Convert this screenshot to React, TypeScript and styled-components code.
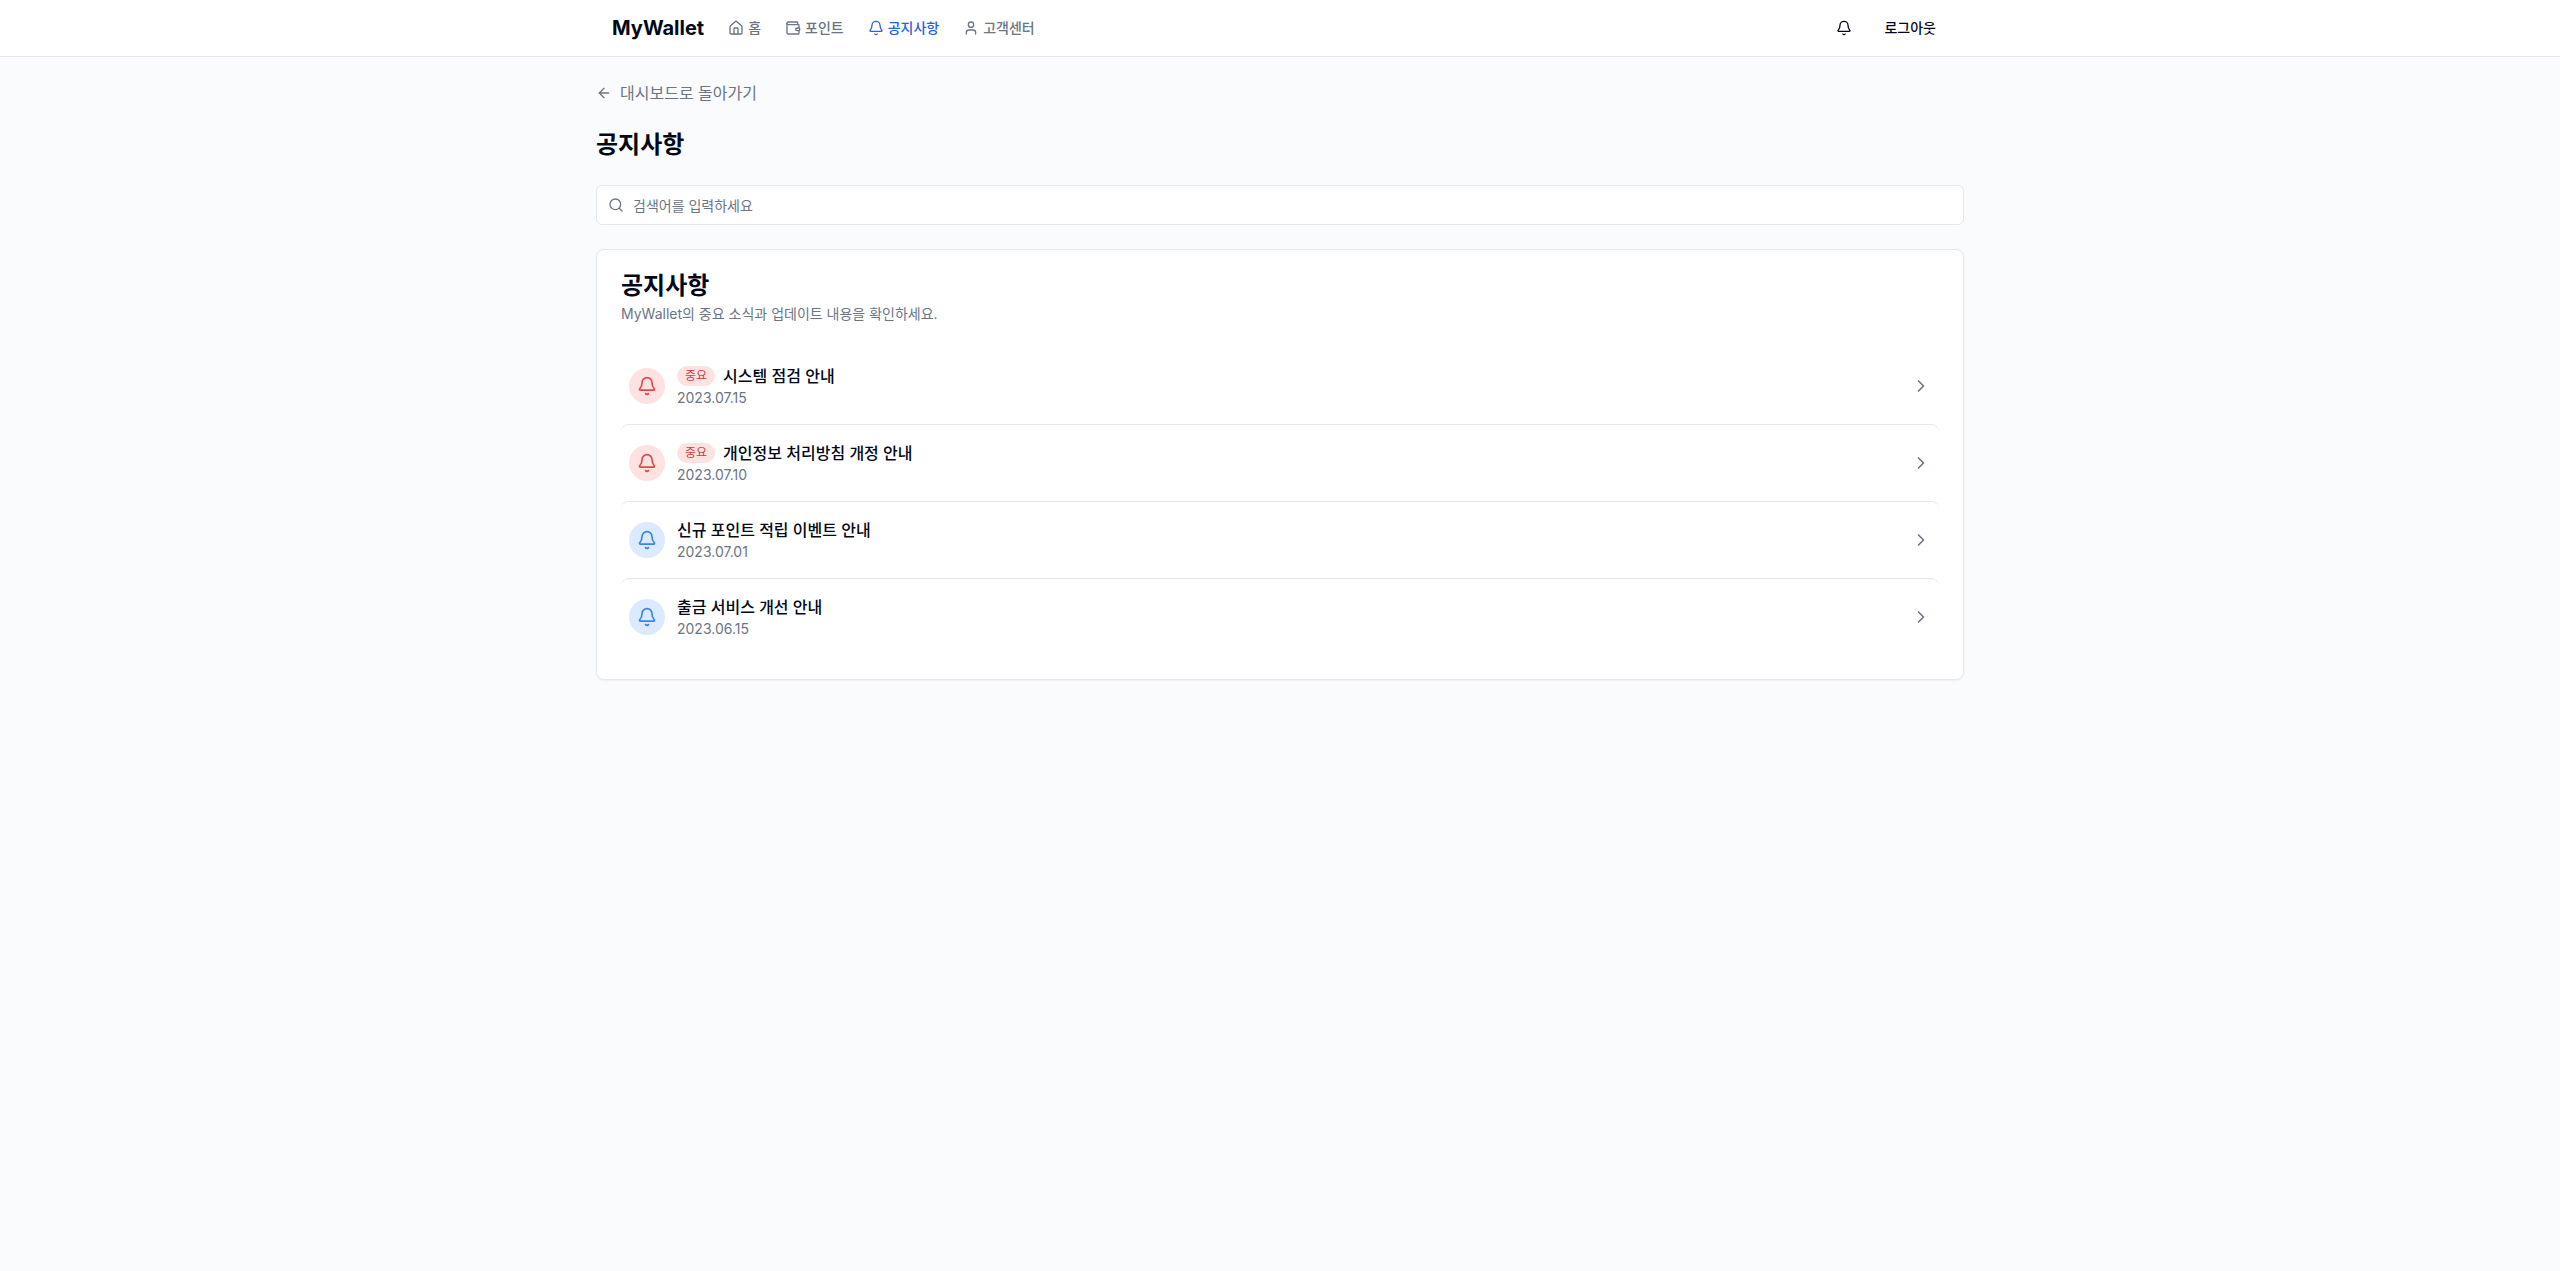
import React, { useState } from "react";
import styled, { createGlobalStyle } from "styled-components";
import { ArrowLeft, Bell, ChevronRight, House, Search, User, Wallet } from "lucide-react";

const colors = {
  page: "#fafbfd",
  surface: "#ffffff",
  text: "#020817",
  muted: "#6b7583",
  border: "#e4e7eb",
  active: "#2563d9",
  red: "#e04848",
  redDark: "#d03c3c",
  redSoft: "#fee2e2",
  blue: "#3b82ec",
  blueSoft: "#dbeafe",
};

const GlobalStyle = createGlobalStyle`
  *, *::before, *::after { box-sizing: border-box; }
  body {
    margin: 0;
    background: ${colors.page};
    color: ${colors.text};
    font-family: Inter, "Noto Sans CJK KR", sans-serif;
    font-size: 16px;
    line-height: 24px;
    -webkit-font-smoothing: antialiased;
  }
  button, input { font: inherit; color: inherit; }
  a { color: inherit; text-decoration: none; }
  svg { display: block; flex-shrink: 0; }
`;

const TopBar = styled.header`
  background: ${colors.surface};
  border-bottom: 1px solid ${colors.border};
`;

const TopBarInner = styled.div`
  display: flex;
  align-items: center;
  max-width: 1400px;
  height: 56px;
  margin: 0 auto;
  padding: 0 32px;
`;

const Logo = styled.a`
  margin-right: 24px;
  font-size: 20px;
  font-weight: 700;
  line-height: 28px;
`;

const Nav = styled.nav`
  display: flex;
  gap: 24px;
`;

const NavLink = styled.a<{ $active?: boolean }>`
  display: flex;
  align-items: center;
  gap: 4px;
  font-size: 14px;
  font-weight: 500;
  line-height: 20px;
  color: ${(p) => (p.$active ? colors.active : colors.muted)};
`;

const Actions = styled.div`
  display: flex;
  align-items: center;
  gap: 8px;
  margin-left: auto;
`;

const GhostButton = styled.button<{ $icon?: boolean }>`
  display: flex;
  align-items: center;
  justify-content: center;
  width: ${(p) => (p.$icon ? "40px" : "auto")};
  height: ${(p) => (p.$icon ? "40px" : "36px")};
  padding: ${(p) => (p.$icon ? "0" : "0 12px")};
  border: 0;
  border-radius: 6px;
  background: transparent;
  font-size: 14px;
  font-weight: 500;
  line-height: 20px;
  cursor: pointer;
  &:hover { background: #f1f5f9; }
`;

const Main = styled.main`
  display: flex;
  flex-direction: column;
  gap: 24px;
  max-width: 1400px;
  margin: 0 auto;
  padding: 24px 16px;
`;

const BackLink = styled.a`
  display: flex;
  align-items: center;
  align-self: flex-start;
  gap: 8px;
  color: ${colors.muted};
`;

const PageTitle = styled.h1`
  margin: 0;
  font-size: 24px;
  font-weight: 700;
  line-height: 32px;
`;

const SearchBox = styled.label`
  position: relative;
  display: flex;
  align-items: center;
  color: ${colors.muted};
`;

const SearchIcon = styled(Search)`
  position: absolute;
  left: 12px;
  pointer-events: none;
`;

const SearchInput = styled.input`
  width: 100%;
  height: 40px;
  padding: 0 12px 0 36px;
  border: 1px solid ${colors.border};
  border-radius: 6px;
  background: ${colors.surface};
  color: ${colors.text};
  font-size: 14px;
  line-height: 20px;
  &::placeholder { color: ${colors.muted}; opacity: 1; }
`;

const Card = styled.section`
  padding: 24px;
  border: 1px solid ${colors.border};
  border-radius: 8px;
  background: ${colors.surface};
  box-shadow: 0 1px 2px rgba(0, 0, 0, 0.05);
`;

const CardHeader = styled.div`
  display: flex;
  flex-direction: column;
  gap: 6px;
  margin-bottom: 24px;
`;

const CardTitle = styled.h2`
  margin: 0;
  font-size: 24px;
  font-weight: 600;
  line-height: 24px;
`;

const SmallText = styled.p`
  margin: 0;
  font-size: 14px;
  line-height: 20px;
  color: ${colors.muted};
`;

const NoticeList = styled.ul`
  margin: 0;
  padding: 0;
  list-style: none;
`;

const NoticeLink = styled.a<{ $divided: boolean }>`
  display: flex;
  align-items: center;
  gap: 12px;
  padding: 16px 8px;
  border-top: ${(p) => (p.$divided ? `1px solid ${colors.border}` : "0")};
  border-radius: 8px;
  &:hover { background: #f9fafb; }
`;

const NoticeIcon = styled.span<{ $important: boolean }>`
  padding: 8px;
  border-radius: 50%;
  background: ${(p) => (p.$important ? colors.redSoft : colors.blueSoft)};
  color: ${(p) => (p.$important ? colors.red : colors.blue)};
`;

const NoticeBody = styled.div`
  flex: 1;
  min-width: 0;
`;

const NoticeHeading = styled.div`
  display: flex;
  align-items: center;
  gap: 8px;
`;

const NoticeTitle = styled.h3`
  margin: 0;
  font-size: 16px;
  font-weight: 500;
  line-height: 24px;
`;

const Badge = styled.span`
  padding: 2px 8px;
  border-radius: 10px;
  background: ${colors.redSoft};
  color: ${colors.redDark};
  font-size: 12px;
  line-height: 16px;
`;

const Chevron = styled(ChevronRight)`
  color: ${colors.muted};
`;

const navItems = [
  { label: "홈", icon: House },
  { label: "포인트", icon: Wallet },
  { label: "공지사항", icon: Bell, active: true },
  { label: "고객센터", icon: User },
];

const notices = [
  { title: "시스템 점검 안내", date: "2023.07.15", important: true },
  { title: "개인정보 처리방침 개정 안내", date: "2023.07.10", important: true },
  { title: "신규 포인트 적립 이벤트 안내", date: "2023.07.01", important: false },
  { title: "출금 서비스 개선 안내", date: "2023.06.15", important: false },
];

export default function App() {
  const [query, setQuery] = useState("");
  const visible = notices.filter((n) => n.title.includes(query.trim()));

  return (
    <>
      <GlobalStyle />
      <TopBar>
        <TopBarInner>
          <Logo href="#">MyWallet</Logo>
          <Nav>
            {navItems.map(({ label, icon: Icon, active }) => (
              <NavLink key={label} href="#" $active={active} aria-current={active ? "page" : undefined}>
                <Icon size={16} />
                {label}
              </NavLink>
            ))}
          </Nav>
          <Actions>
            <GhostButton type="button" $icon aria-label="알림">
              <Bell size={16} />
            </GhostButton>
            <GhostButton type="button">로그아웃</GhostButton>
          </Actions>
        </TopBarInner>
      </TopBar>
      <Main>
        <BackLink href="#">
          <ArrowLeft size={16} />
          대시보드로 돌아가기
        </BackLink>
        <PageTitle>공지사항</PageTitle>
        <SearchBox>
          <SearchIcon size={16} />
          <SearchInput
            type="text"
            aria-label="검색어"
            placeholder="검색어를 입력하세요"
            value={query}
            onChange={(e) => setQuery(e.target.value)}
          />
        </SearchBox>
        <Card>
          <CardHeader>
            <CardTitle>공지사항</CardTitle>
            <SmallText>MyWallet의 중요 소식과 업데이트 내용을 확인하세요.</SmallText>
          </CardHeader>
          <NoticeList>
            {visible.map((n, i) => (
              <li key={n.title}>
                <NoticeLink href="#" $divided={i > 0}>
                  <NoticeIcon $important={n.important}>
                    <Bell size={20} />
                  </NoticeIcon>
                  <NoticeBody>
                    <NoticeHeading>
                      {n.important && <Badge>중요</Badge>}
                      <NoticeTitle>{n.title}</NoticeTitle>
                    </NoticeHeading>
                    <SmallText>{n.date}</SmallText>
                  </NoticeBody>
                  <Chevron size={20} />
                </NoticeLink>
              </li>
            ))}
          </NoticeList>
        </Card>
      </Main>
    </>
  );
}
